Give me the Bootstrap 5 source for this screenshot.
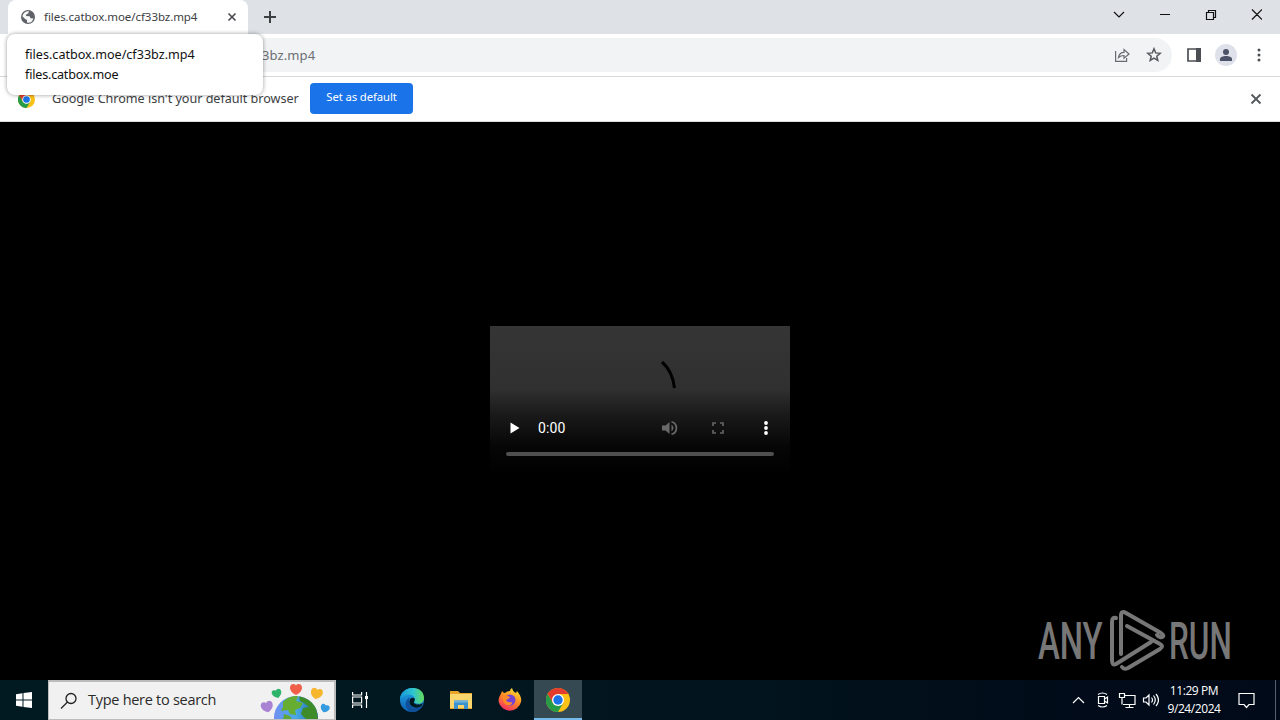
<!DOCTYPE html>
<html lang="en">
<head>
    <meta charset="UTF-8">
    <meta name="viewport" content="width=device-width, initial-scale=1.0">
    <title>files.catbox.moe/cf33bz.mp4</title>
    <link href="https://cdn.jsdelivr.net/npm/bootstrap@5.3.0/dist/css/bootstrap.min.css" rel="stylesheet">
    <style>
        body { width: 1280px; height: 720px; background: #000; font-family: "Noto Sans", "Open Sans", sans-serif; font-size: 12px; line-height: 1; color: #3c4043; }
        svg { display: block; flex: none; }
        .tabstrip { height: 34px; background: #dee1e6; }
        .tab { width: 240px; height: 34px; margin-left: 8px; padding-left: 13px; background: #fff; border-radius: 8px 8px 0 0; }
        .tab-title { width: 182px; margin-left: 9px; font-size: 11.5px; letter-spacing: -.06px; }
        .win-buttons { height: 28px; padding-right: 18px; }
        .toolbar { height: 43px; background: #fff; border-bottom: 1px solid #d5d7da; }
        .address { width: 1068px; height: 34px; margin-left: 104px; padding: 0 10px 0 158px; background: #f1f3f4; border-radius: 17px; }
        .address-text { font-size: 13px; color: #6b6f74; letter-spacing: .1px; }
        .avatar { width: 22px; height: 22px; background: #dee1e9; }
        .infobar { height: 45px; background: #fff; border-bottom: 1px solid #ddd; }
        .infobar-text { width: 258px; margin-left: 17px; font-size: 12.6px; letter-spacing: -.02px; padding-top: 1px; }
        .btn-default { width: 103px; height: 31px; margin-bottom: 2px; padding: 0 0 2px; border: 0; border-radius: 4px; font-size: 11.3px; letter-spacing: -.1px; background: #1a73e8; color: #fff; }
        .hovercard { left: 7px; top: 34px; width: 256px; height: 61px; padding: 11px 18px; border-radius: 8px; background: #fff; color: #111; font-size: 12.6px; line-height: 20px; box-shadow: 0 0 4px rgba(0, 0, 0, .4); }
        .host-line { letter-spacing: -.2px; }
        .page { height: 558px; background: #000; }
        .player { width: 300px; height: 150px; background: linear-gradient(#353535 0, #303030 42%, #1b1b1b 58%, #060606 80%, #000 100%); }
        .controls { height: 32px; color: #fff; }
        .time { width: 124px; margin-left: 18px; font-family: "Roboto", sans-serif; font-size: 14px; letter-spacing: .1px; }
        .timeline { width: 268px; height: 4px; margin: 8px 16px 0; border-radius: 2px; background: #505050; }
        .watermark { left: 1038px; top: 608px; }
        .taskbar { height: 40px; background: linear-gradient(90deg, #011a22, #02151e 55%, #010b19 85%, #010a19); color: #fff; }
        .start { width: 48px; }
        .search { width: 288px; height: 40px; padding-left: 11px; background: #f1f1f1; border: 1px solid #bcbcbc; border-width: 2px 2px 1px 1px; color: #2b2b2b; }
        .search-text { width: 172px; margin-left: 10px; font-family: "Open Sans", sans-serif; font-size: 14.5px; letter-spacing: -.28px; }
        .task { width: 49px; height: 40px; }
        .task-view, .task-active { width: 48px; }
        .task-active { background: #344952; border-bottom: 2px solid #76b9ed; padding-top: 2px; }
        .clock { width: 72px; margin-left: -1px; font-family: "Open Sans", sans-serif; font-size: 12px; line-height: 18px; letter-spacing: -.42px; }
        .desktop-edge { width: 5px; height: 40px; border-left: 1px solid #58616b; }
    </style>
</head>
<body class="position-relative overflow-hidden">
    <!-- Shared browser logo -->
    <svg width="0" height="0" class="position-absolute">
        <defs>
            <g id="chrome">
                <circle cx="12" cy="12" r="12" fill="#fbc116"/>
                <path d="M1.6 6A12 12 0 0 1 22.4 6H12L6.8 15z" fill="#e33b2e"/>
                <path d="M1.6 6 6.8 15 12 18 17.2 15 12 24A12 12 0 0 1 1.6 6z" fill="#269b48"/>
                <circle cx="12" cy="12" r="6" fill="#fff"/>
                <circle cx="12" cy="12" r="4.7" fill="#1a73e8"/>
            </g>
        </defs>
    </svg>

    <header>
        <div class="tabstrip d-flex align-items-center">
            <div class="tab d-flex align-items-center">
                <svg width="14" height="14" viewBox="0 0 14 14"><circle cx="7" cy="7" r="7" fill="#5f6368"/><path d="M8 1.3 7.4 3.5 5.3 4.2 5 6l3.6.3 1 2 2.8.2A5.7 5.7 0 0 1 6 12.6V10L3.8 8.8 1.4 6.3A5.7 5.7 0 0 1 8 1.3z" fill="#fff" opacity=".95"/><path d="m8 1.8 2 .8.7 2L9 5.5 7.5 4z" fill="#5f6368"/></svg>
                <div class="tab-title text-nowrap">files.catbox.moe/cf33bz.mp4</div>
                <svg width="12" height="12" viewBox="0 0 12 12" stroke="#45494d" stroke-width="1.6"><path d="m2.500 2.500 7 7m0-7-7 7"/></svg>
            </div>
            <svg class="ms-3" width="12" height="12" viewBox="0 0 12 12" stroke="#3c4043" stroke-width="2"><path d="M6 0v12M0 6h12"/></svg>
            <div class="win-buttons d-flex align-items-center align-self-start ms-auto">
                <svg width="152" height="14" viewBox="0 0 152 14" fill="none" stroke="#111" stroke-width="1.2"><path d="m4 5 5 5 5-5"/><path d="M50 7.5h10M96.500 5.500h7v7h-7zM98.500 5V3.500h7v7H104M142 2.500l10 10m0-10-10 10"/></svg>
            </div>
        </div>
        <div class="toolbar d-flex align-items-center">
            <div class="address d-flex align-items-center">
                <span class="address-text">3bz.mp4</span>
                <svg class="ms-auto" width="16" height="16" viewBox="0 0 16 16" fill="none" stroke="#686c71" stroke-width="1.2"><path d="M1.600 4v10.400h11V11"/><path d="M4.500 10.500C5 7 7 5.300 10 5.300V2.500L15 7l-5 4.200V8.500C7.500 8.500 6 9 4.500 10.500z"/></svg>
                <svg class="ms-3" width="16" height="16" viewBox="0 0 16 16" fill="none" stroke="#55595e" stroke-width="1.500"><path d="m8 1.800 1.700 4.100 4.500.4-3.400 2.900 1 4.300L8 11.200l-3.800 2.300 1-4.300L1.800 6.300l4.500-.4z"/></svg>
            </div>
            <svg style="margin-left:15px" width="14" height="14" viewBox="0 0 14 14"><path d="M1 1h12v12H1z" fill="#fff" stroke="#4b4f54" stroke-width="1.700"/><path d="M9 0h5v14H9z" fill="#4b4f54"/></svg>
            <div class="avatar rounded-circle d-flex align-items-center justify-content-center" style="margin-left:14px">
                <svg width="12" height="12" viewBox="0 0 12 12" fill="#4c5267"><circle cx="6" cy="3" r="3"/><path d="M0 12v-2c0-2 3-3 6-3s6 1 6 3v2z"/></svg>
            </div>
            <svg style="margin-left:20px" width="4" height="14" viewBox="0 0 4 14" fill="#4b4f54"><circle cx="2" cy="2" r="1.500"/><circle cx="2" cy="7" r="1.500"/><circle cx="2" cy="12" r="1.500"/></svg>
        </div>
        <div class="infobar d-flex align-items-center">
            <svg style="margin-left:18px" width="17" height="17" viewBox="0 0 24 24"><use href="#chrome"/></svg>
            <span class="infobar-text text-nowrap">Google Chrome isn't your default browser</span>
            <button class="btn btn-default" type="button">Set as default</button>
            <svg class="ms-auto" style="margin-right:18px" width="12" height="12" viewBox="0 0 12 12" stroke="#55595e" stroke-width="1.900"><path d="m1.500 1.500 9 9m0-9-9 9"/></svg>
        </div>
    </header>
    <div class="hovercard position-absolute text-nowrap">
        <div>files.catbox.moe/cf33bz.mp4</div>
        <div class="host-line">files.catbox.moe</div>
    </div>

    <main class="page d-flex align-items-center justify-content-center">
        <div class="player">
            <div class="d-flex justify-content-end pe-5">
                <svg style="margin-right:62px" width="20" height="86" viewBox="0 0 20 86" fill="none" stroke="#000" stroke-width="3"><path d="M2 36Q12.500 45 14.500 62"/></svg>
            </div>
            <div class="controls d-flex align-items-center">
                <svg style="margin-left:20px" width="10" height="12" viewBox="0 0 10 12" fill="#fff"><path d="m.5.500 9 5.500-9 5.500z"/></svg>
                <span class="time">0:00</span>
                <svg width="16" height="16" viewBox="0 0 16 16" fill="#686868"><path d="M0 5.500h3.500L7.500 2v12l-4-3.500H0z"/><path d="M9.500 4.500q4 3.500 0 7z"/><path d="M9.500 1.700a6.500 6.500 0 0 1 0 12.600" fill="none" stroke="#686868" stroke-width="1.700"/></svg>
                <svg style="margin-left:34px" width="12" height="12" viewBox="0 0 12 12" fill="none" stroke="#646464" stroke-width="1.700"><path d="M1 4V1h3m4 0h3v3m0 4v3H8m-4 0H1V8"/></svg>
                <svg style="margin-left:40px" width="4" height="14" viewBox="0 0 4 14" fill="#fff"><circle cx="2" cy="2" r="1.900"/><circle cx="2" cy="7" r="1.900"/><circle cx="2" cy="12" r="1.900"/></svg>
            </div>
            <div class="timeline"></div>
        </div>
    </main>
    <!-- Watermark over the page -->
    <svg class="watermark position-absolute" width="194" height="66" viewBox="0 0 194 66" fill="#777" font-family="Roboto, sans-serif" font-weight="500">
        <text transform="translate(0 51) scale(.61 1)" font-size="52" textLength="106" lengthAdjust="spacingAndGlyphs">ANY</text>
        <text transform="translate(131 51) scale(.61 1)" font-size="52" textLength="103" lengthAdjust="spacingAndGlyphs">RUN</text>
        <g fill="none" stroke="#777" stroke-width="4" stroke-linejoin="round" stroke-linecap="round">
            <path d="M78 10q-4-1-4 4v38q0 6 4 4l35-22"/>
            <path d="M83 46V8q0-6 5-3l35 20q4 3 1 4t-5-2"/>
            <path d="m89 18 33 18q4 2 0 5L90 60q-4 2-6-1"/>
        </g>
    </svg>

    <footer class="taskbar d-flex align-items-center">
        <div class="start d-flex justify-content-center">
            <svg width="16" height="16" viewBox="0 0 16 16" fill="#fff"><path d="M0 2.200 6.500 1.200v6.300H0zM7.500 1 16 0v7.500H7.500zM0 8.500h6.500v6.300L0 13.800zM7.500 8.500H16V16l-8.500-1z"/></svg>
        </div>
        <div class="search d-flex align-items-center">
            <svg width="18" height="18" viewBox="0 0 18 18" fill="none" stroke="#222" stroke-width="1.300"><circle cx="11" cy="6.500" r="5"/><path d="m7.500 10-6.500 6.500"/></svg>
            <span class="search-text text-nowrap">Type here to search</span>
            <svg width="70" height="37" viewBox="0 0 70 37">
                <defs>
                    <path id="heart" d="M6 11C2 9 0 6.500 0 4-.2-.2 4-1 6 1.500 8-1 12.200-.2 12 4c0 2.500-2 5-6 7z"/>
                    <linearGradient id="sea"><stop stop-color="#7090f3"/><stop offset=".5" stop-color="#49a8e5"/><stop offset="1" stop-color="#17649c"/></linearGradient>
                    <clipPath id="ball"><circle cx="36" cy="36" r="22"/></clipPath>
                </defs>
                <circle cx="36" cy="36" r="22" fill="url(#sea)"/>
                <g clip-path="url(#ball)">
                    <path d="M23 20q6-7 15-6l-2 5 7 2-3 5-5 2 1 5-6-1-2-4-7 1 2-4z" fill="#66ad31"/>
                    <path d="M39 14q12 2 17 11l2 12H46l-5-5 2-6 6-1-5-4-4-2z" fill="#3e8b2a"/>
                    <path d="m24 32 6 2 2 4h-9z" fill="#62a735"/>
                </g>
                <use href="#heart" transform="translate(30 2)" fill="#f06048"/>
                <use href="#heart" transform="translate(52 5) rotate(14)" fill="#f6b62e"/>
                <use href="#heart" transform="translate(11 9) rotate(-18) scale(.8)" fill="#2fb46c"/>
                <use href="#heart" transform="translate(0 21) rotate(-14)" fill="#aa82d4"/>
                <use href="#heart" transform="translate(62 21) rotate(20) scale(.75)" fill="#349be0"/>
            </svg>
        </div>
        <div class="task task-view d-flex align-items-center justify-content-center">
            <svg width="18" height="16" viewBox="0 0 18 16" fill="none" stroke="#fff" stroke-width="1.200"><path d="M1.600 0v3h9V0M1.600 5h9v6h-9zM1.600 16v-3h9v3M15.500 0v16"/><path d="M14 4h3v3h-3z" fill="#fff" stroke="none"/></svg>
        </div>
        <div class="task d-flex align-items-center justify-content-center" style="margin-left:3px">
            <svg width="24" height="24" viewBox="0 0 24 24">
                <defs>
                    <linearGradient id="edgeTop"><stop stop-color="#1699dc"/><stop offset=".55" stop-color="#2fc5d0"/><stop offset="1" stop-color="#66dc58"/></linearGradient>
                    <linearGradient id="edgeLow" x2="0" y2="1"><stop stop-color="#23a9e5"/><stop offset="1" stop-color="#0b5fb5"/></linearGradient>
                </defs>
                <circle cx="12" cy="12" r="12" fill="url(#edgeLow)"/>
                <path d="M0 11C1-3 24-4 24 10c0 5-5 7-9 5-2-1 0-2 0-4C14 5 5 5 0 11z" fill="url(#edgeTop)"/>
                <path d="M9 14c0 6 7 8 13 4-3 6-8 6-10 6-7-2-9-11-2-15-1 2-1 3-1 5z" fill="#104f99"/>
                <path d="M14.500 10.500c1 2-1 3-.5 4.500 2 2 6 2 9 0l-1.500 3c-6 4-13 0-12-5 .5-3 3-4 5-2.500z" fill="#021820"/>
            </svg>
        </div>
        <div class="task d-flex align-items-center justify-content-center">
            <svg width="22" height="20" viewBox="0 0 22 20"><path d="M0 1h8l2 2h12v16H0z" fill="#e9a52a"/><path d="M0 4h22v14H0z" fill="#fbd66d"/><path d="M4 10.500h14V19h-4v-4H8v4H4z" fill="#3d91cc"/><path d="M4 10.500h14v2H4z" fill="#6eb3dc"/></svg>
        </div>
        <div class="task d-flex align-items-center justify-content-center">
            <svg width="24" height="24" viewBox="0 0 24 24">
                <defs><linearGradient id="fire" x1=".8" y1="0" x2=".3" y2="1"><stop stop-color="#ffe936"/><stop offset=".5" stop-color="#ff8a24"/><stop offset="1" stop-color="#f52d65"/></linearGradient></defs>
                <path d="M4 3q1 2 3 2 2-2 5-2 0-2 2-3 1 4 4 5l1-2c3 4 5 7 4 11A11.500 11.500 0 0 1 .700 14C0 9 3 7 4 3z" fill="url(#fire)"/>
                <circle cx="12" cy="12" r="5.500" fill="#7544d5"/>
                <path d="M5 8q4-1 7 1-1 2-4 3 1 3 6 2 0 4-5 3-5-2-4-9z" fill="#ff8a28"/>
            </svg>
        </div>
        <div class="task task-active d-flex align-items-center justify-content-center">
            <svg width="24" height="24" viewBox="0 0 24 24"><use href="#chrome"/></svg>
        </div>
        <div class="d-flex align-items-center ms-auto">
            <svg width="88" height="20" viewBox="0 0 88 20" fill="none" stroke="#fff" stroke-width="1.200">
                <path d="m2 13 5.500-5.500L13 13"/>
                <path d="M27.500 6.500h6v7h-6zM33.500 9l3-2v6l-3-2M27 4.500q4.500-3 9 0M27 15.500q4.500 3 9 0"/>
                <path d="M54 5.500h10v9H52M58.500 14.500v3M54.500 17.500h8M48.500 3.500h5v4h-5zM51 7.500v7"/>
                <path d="M72.500 8h2.500l3-3v10l-3-3h-2.500zM80.500 7.500q2 2.500 0 5M82.500 5.500q3.500 4.500 0 9M85 4q5 6 0 12"/>
            </svg>
            <div class="clock text-center"><div>11:29 PM</div><div>9/24/2024</div></div>
            <svg style="margin-left:8px" width="17" height="17" viewBox="0 0 17 17" fill="none" stroke="#fff" stroke-width="1.200"><path d="M1 1.500h15v11h-5L8.500 15.500 6 12.500H1z"/></svg>
            <div class="desktop-edge" style="margin-left:20px"></div>
        </div>
    </footer>
    <script src="https://cdn.jsdelivr.net/npm/bootstrap@5.3.0/dist/js/bootstrap.bundle.min.js"></script>
</body>
</html>
